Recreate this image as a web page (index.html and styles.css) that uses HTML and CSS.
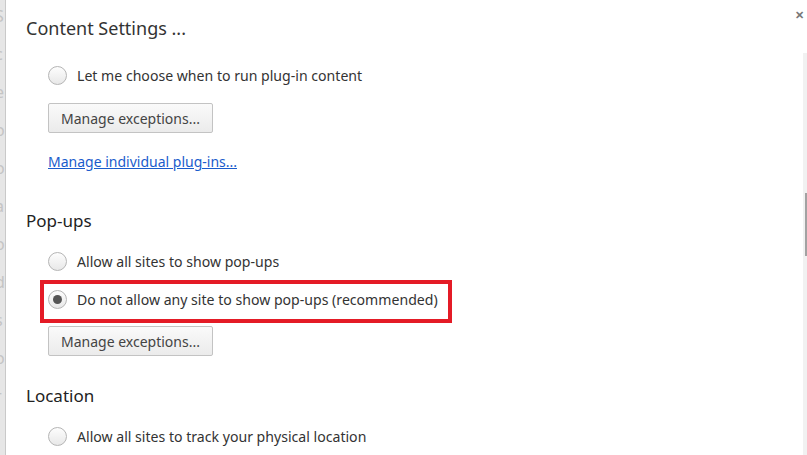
FILE: index.html
```html
<!DOCTYPE html>
<html>
<head>
<meta charset="utf-8">
<link rel="stylesheet" href="styles.css">
</head>
<body>
<div class="screen">
  <div class="backdrop">
    <span>S</span><span>c</span><span>e</span><span>o</span><span>o</span><span>a</span><span>o</span><span>d</span><span>s</span><span>o</span><span>r</span>
  </div>
  <div class="dialog">
    <div class="content">
      <h1 class="title">Content Settings ...</h1>
      <div class="group first">
        <label class="radio-row"><span class="radio"></span><span class="label">Let me choose when to run plug-in content</span></label>
        <button class="btn">Manage exceptions...</button>
        <a class="link" href="#">Manage individual plug-ins...</a>
      </div>
      <h2 class="section">Pop-ups</h2>
      <div class="group">
        <label class="radio-row"><span class="radio"></span><span class="label">Allow all sites to show pop-ups</span></label>
        <div class="highlight">
          <label class="radio-row"><span class="radio checked"></span><span class="label">Do not allow any site to show pop-ups (recommended)</span></label>
        </div>
        <button class="btn btn-tight">Manage exceptions...</button>
      </div>
      <h2 class="section section-close">Location</h2>
      <div class="group">
        <label class="radio-row"><span class="radio"></span><span class="label">Allow all sites to track your physical location</span></label>
      </div>
    </div>
    <div class="scrollbar"><div class="thumb"></div></div>
    <div class="close">&#x2715;</div>
  </div>
</div>
</body>
</html>
```
FILE: styles.css
```css
* { box-sizing: border-box; }
html, body { margin: 0; padding: 0; }
body {
  width: 807px;
  height: 455px;
  overflow: hidden;
  font-family: "Noto Sans", "Open Sans", sans-serif;
  color: #333;
  background: #fff;
}
.screen {
  display: flex;
  height: 455px;
}
.backdrop {
  width: 6px;
  flex: none;
  background: #e6e6e6;
  border-right: 1px solid #c9c9c9;
  display: flex;
  flex-direction: column;
  overflow: hidden;
  padding-top: 8px;
  gap: 22px;
}
.backdrop span {
  font-size: 16px;
  line-height: 16px;
  color: #c4c4c4;
  margin-left: -5px;
}
.dialog {
  flex: 1;
  display: flex;
  position: relative;
  background: #fff;
}
.content {
  flex: 1;
  padding-left: 20px;
  padding-top: 16px;
}
.title {
  margin: 0;
  font-weight: normal;
  font-size: 18px;
  line-height: 24px;
  color: #333;
}
.section {
  margin: 35px 0 0;
  font-weight: normal;
  font-size: 17px;
  line-height: 24px;
  color: #222;
}
.section-close { margin-top: 28px; }
.group {
  padding-left: 22px;
  display: flex;
  flex-direction: column;
  align-items: flex-start;
}
.group.first { margin-top: 23px; }
.section + .group { margin-top: 16px; }
.radio-row {
  display: flex;
  align-items: center;
  height: 24px;
  font-size: 14.1px;
  color: #333;
}
.radio {
  width: 19px;
  height: 19px;
  border-radius: 50%;
  border: 1px solid #b5b5b5;
  background: linear-gradient(#fdfdfd, #e8e8e8);
  margin-right: 10px;
  display: flex;
  align-items: center;
  justify-content: center;
  flex: none;
}
.radio.checked::after {
  content: "";
  width: 9px;
  height: 9px;
  border-radius: 50%;
  background: #555;
}
.btn {
  margin-top: 16px;
  width: 165px;
  height: 30px;
  border: 1px solid #c3c3c3;
  border-radius: 2px;
  background: linear-gradient(#fafafa, #ebebeb);
  font-family: inherit;
  font-size: 14px;
  color: #444;
  padding: 0;
}
.btn-tight { margin-top: 3px; }
.link {
  margin-top: 17px;
  font-size: 14px;
  color: #1a5ccc;
  text-decoration: underline;
  line-height: 24px;
}
.highlight {
  margin-left: -8px;
  margin-top: 7px;
  width: 412px;
  height: 43px;
  border: 4px solid #e41b26;
  padding-left: 4px;
  display: flex;
  align-items: center;
  padding-bottom: 4px;
}
.scrollbar {
  width: 4px;
  flex: none;
  margin-top: 53px;
  background: #f1f1f1;
  padding-top: 140px;
}
.thumb {
  width: 2px;
  margin-left: 2px;
  height: 63px;
  background: #a2a2a2;
}
.close {
  position: absolute;
  right: 3px;
  top: 7px;
  font-size: 11px;
  font-weight: bold;
  color: #777;
}
```
